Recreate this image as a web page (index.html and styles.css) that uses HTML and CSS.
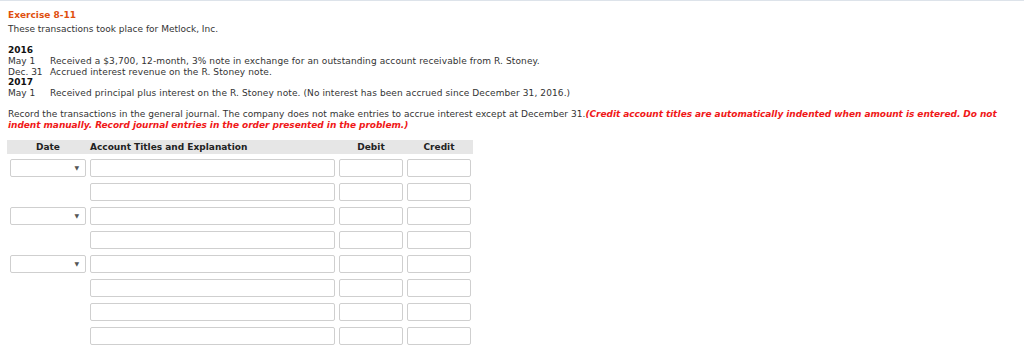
FILE: index.html
```html
<!DOCTYPE html>
<html lang="en">
<head>
    <meta charset="UTF-8">
    <title>Exercise 8-11</title>
    <link rel="stylesheet" href="styles.css">
</head>
<body>
    <div class="page">
        <h2 class="title">Exercise 8-11</h2>
        <p class="intro">These transactions took place for Metlock, Inc.</p>

        <div class="events">
            <div class="year">2016</div>
            <div class="event"><span class="when">May 1</span><span>Received a $3,700, 12-month, 3% note in exchange for an outstanding account receivable from R. Stoney.</span></div>
            <div class="event"><span class="when">Dec. 31</span><span>Accrued interest revenue on the R. Stoney note.</span></div>
            <div class="year">2017</div>
            <div class="event"><span class="when">May 1</span><span>Received principal plus interest on the R. Stoney note. (No interest has been accrued since December 31, 2016.)</span></div>
        </div>

        <p class="instructions">Record the transactions in the general journal. The company does not make entries to accrue interest except at December 31.<em class="warn">(Credit account titles are automatically indented when amount is entered. Do not indent manually. Record journal entries in the order presented in the problem.)</em></p>

        <div class="journal">
            <div class="head">
                <span class="c-date">Date</span>
                <span class="c-acct">Account Titles and Explanation</span>
                <span class="c-num">Debit</span>
                <span class="c-num">Credit</span>
            </div>
            <div class="rows" id="rows"></div>
        </div>
    </div>
    <script>
        // rows that start a new entry get a date picker
        const withDate = [true, false, true, false, true, false, false, false];
        const rows = document.getElementById('rows');

        withDate.forEach(hasDate => {
            const date = hasDate
                ? '<div class="select"><span class="arrow">&#9660;</span></div>'
                : '<div></div>';
            rows.insertAdjacentHTML('beforeend',
                date +
                '<input type="text" class="field">' +
                '<input type="text" class="field">' +
                '<input type="text" class="field">');
        });
    </script>
</body>
</html>
```

FILE: styles.css
```css
body {
	margin: 0;
	font-family: "DejaVu Sans", Verdana, sans-serif;
	font-size: 9px;
	color: #333;
	background-color: white;
	border-top: 1px solid #dde3ea;
}
.page {
	padding: 7px 7px 8px;
}
.title {
	margin: 0 0 0 1px;
	font-size: 9px;
	line-height: 14px;
	color: #e0500f;
}
.intro {
	margin: 1px 0 0 1px;
	line-height: 12px;
}
.events {
	margin: 10px 0 0 1px;
	line-height: 10.8px;
	letter-spacing: 0.1px;
}
.year {
	font-weight: bold;
	color: #111;
	letter-spacing: 0;
}
.event {
	display: flex;
}
.when {
	width: 42px;
	flex-shrink: 0;
	letter-spacing: 0;
}
.instructions {
	margin: 10px 0 0 1px;
	line-height: 11px;
	max-width: 1005px;
	letter-spacing: 0.05px;
}
.warn {
	font-weight: bold;
	color: #f01818;
	letter-spacing: -0.05px;
}
.journal {
	margin-top: 9px;
	width: 466px;
}
.head {
	display: grid;
	grid-template-columns: 76px 245px 64px 64px;
	column-gap: 4px;
	padding: 0 2px 0 3px;
	height: 14px;
	line-height: 14px;
	background-color: #e6e6e6;
	font-weight: bold;
	color: #222;
}
.c-date, .c-num {
	text-align: center;
}
.rows {
	display: grid;
	grid-template-columns: 76px 245px 64px 64px;
	column-gap: 4px;
	row-gap: 6px;
	padding: 5px 2px 0 3px;
}
.field, .select {
	box-sizing: border-box;
	height: 18px;
	margin: 0;
	border: 1px solid #cfcfcf;
	border-radius: 2px;
	background-color: white;
}
.field {
	width: 100%;
}
.select {
	display: flex;
	justify-content: flex-end;
	align-items: center;
	padding-right: 6px;
}
.arrow {
	font-size: 6px;
	color: #555;
}
```
